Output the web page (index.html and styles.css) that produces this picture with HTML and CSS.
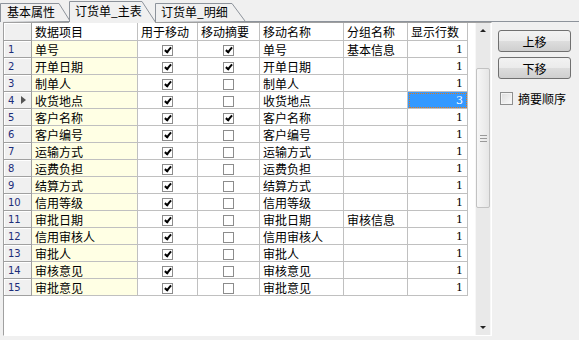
FILE: index.html
```html
<!DOCTYPE html>
<html lang="zh-CN">
<head>
  <meta charset="UTF-8">
  <title>移动设置</title>
  <link rel="stylesheet" href="styles.css">
</head>
<body>
  <!-- Tabs -->
  <div class="tabs">
    <div class="tab t1">
      <svg width="72" height="22"><path d="M0.5 22 V3.5 H59 L70 21" fill="#f0f0f0" stroke="#8d939b"/></svg>
      <span>基本属性</span>
    </div>
    <div class="tab t3">
      <svg width="92" height="22"><path d="M0.5 22 V3.5 H77 L90 21" fill="#f0f0f0" stroke="#8d939b"/></svg>
      <span>订货单_明细</span>
    </div>
    <div class="tab t2 active">
      <svg width="90" height="23"><path d="M0 23 V1.5 H73 L86 22 V23 Z" fill="#f0f0f0" stroke="none"/><path d="M0.5 22 V1.5 H73 L86 21.5" fill="none" stroke="#8d939b"/></svg>
      <span>订货单_主表</span>
    </div>
  </div>

  <div class="main">
    <div class="grid">
      <div class="cells">
        <table>
          <colgroup>
            <col class="c-ind"><col class="c-item"><col class="c-use"><col class="c-sum"><col class="c-name"><col class="c-group"><col class="c-rows">
          </colgroup>
          <thead>
            <tr>
              <th class="ind"></th>
              <th>数据项目</th>
              <th>用于移动</th>
              <th>移动摘要</th>
              <th>移动名称</th>
              <th>分组名称</th>
              <th>显示行数</th>
            </tr>
          </thead>
          <tbody id="rows"></tbody>
        </table>
      </div>
      <div class="vscroll">
        <div class="arrow up"></div>
        <div class="track">
          <div class="thumb"><span class="grip"></span></div>
        </div>
        <div class="arrow down"></div>
      </div>
    </div>

    <div class="side">
      <button class="btn">上移</button>
      <button class="btn">下移</button>
      <label class="check"><span class="box"></span>摘要顺序</label>
    </div>
  </div>

  <script>
    // 数据项目, 用于移动, 移动摘要, 分组名称, 显示行数
    const data = [
      ['单号', 1, 1, '基本信息', 1],
      ['开单日期', 1, 1, '', 1],
      ['制单人', 1, 0, '', 1],
      ['收货地点', 1, 0, '', 3],
      ['客户名称', 1, 1, '', 1],
      ['客户编号', 1, 0, '', 1],
      ['运输方式', 1, 0, '', 1],
      ['运费负担', 1, 0, '', 1],
      ['结算方式', 1, 0, '', 1],
      ['信用等级', 1, 0, '', 1],
      ['审批日期', 1, 0, '审核信息', 1],
      ['信用审核人', 1, 0, '', 1],
      ['审批人', 1, 0, '', 1],
      ['审核意见', 1, 0, '', 1],
      ['审批意见', 1, 0, '', 1]
    ];
    const tbody = document.getElementById('rows');
    const cb = on => `<span class="cb${on ? ' on' : ''}"></span>`;

    tbody.innerHTML = data.map((r, i) => `
      <tr>
        <td class="ind">${i + 1}${i === 3 ? '<span class="cur"></span>' : ''}</td>
        <td class="item">${r[0]}</td>
        <td class="mid">${cb(r[1])}</td>
        <td class="mid">${cb(r[2])}</td>
        <td>${r[0]}</td>
        <td>${r[3]}</td>
        <td class="num${i === 3 ? ' sel' : ''}">${r[4]}</td>
      </tr>`).join('');
  </script>
</body>
</html>
```

FILE: styles.css
```css
body {
  margin: 0;
  width: 579px;
  height: 340px;
  overflow: hidden;
  background-color: #f0f0f0;
  font-family: "Noto Sans CJK SC", "Liberation Sans", sans-serif;
  font-size: 12px;
  color: #000;
}

/* tabs */
.tabs {
  display: flex;
  height: 21px;
  border-bottom: 1px solid #8d939b;
}
.tab {
  position: relative;
  height: 21px;
  line-height: 21px;
}
.tab svg {
  position: absolute;
  left: 0;
  top: 0;
}
.tab span {
  position: relative;
  display: block;
  padding-left: 7px;
  padding-top: 1px;
  white-space: nowrap;
}
.t1 {
  width: 72px;
  order: 1;
  z-index: 1;
}
.t2 {
  width: 90px;
  margin-left: -3px;
  order: 2;
  z-index: 3;
}
.t2 span {
  padding-left: 6px;
  padding-top: 0;
}
.t3 {
  width: 92px;
  margin-left: -4px;
  order: 3;
  z-index: 2;
}
.t3 span {
  padding-left: 6px;
}

/* layout */
.main {
  display: flex;
}
.grid {
  display: flex;
  margin-left: 3px;
  width: 487px;
  height: 312px;
  border: 1px solid;
  border-color: #a0a0a0 #ffffff #ffffff #a0a0a0;
  background-color: #fff;
}
.cells {
  width: 471px;
  overflow: hidden;
}

/* table */
table {
  border-collapse: separate;
  border-spacing: 0;
  table-layout: fixed;
  width: 464px;
}
.c-ind { width: 28px; }
.c-item { width: 106px; }
.c-use { width: 60px; }
.c-sum { width: 62px; }
.c-name { width: 84px; }
.c-group { width: 64px; }
.c-rows { width: 60px; }

th, td {
  box-sizing: border-box;
  border-right: 1px solid #c0c0c0;
  border-bottom: 1px solid #c0c0c0;
  padding: 0 0 0 3px;
  white-space: nowrap;
  overflow: hidden;
  font-weight: normal;
  text-align: left;
}
th {
  height: 18px;
  line-height: 16px;
  background-color: #fff;
}
td {
  height: 17px;
  line-height: 15px;
}
.ind {
  position: relative;
  background-color: #f0f0f0;
  border-right-color: #a0a0a0;
  border-bottom-color: #a0a0a0;
  box-shadow: inset 1px 1px 0 #fff;
  color: #1c2d7a;
  font-family: "DejaVu Sans", sans-serif;
  font-size: 10px;
  padding-left: 4px;
}
.cur {
  position: absolute;
  left: 17px;
  top: 4px;
  border-left: 5px solid #555;
  border-top: 4px solid transparent;
  border-bottom: 4px solid transparent;
}
.item {
  background-color: #ffffe4;
}
.mid {
  text-align: center;
  padding: 0;
}
.num {
  text-align: right;
  padding: 0 4px 0 0;
  font-family: "DejaVu Serif", serif;
  font-size: 11px;
}
.num.sel {
  background-color: #3399ff;
  color: #fff;
  outline: 1px dotted #e07a1a;
  outline-offset: -2px;
}

/* checkbox in grid */
.cb {
  position: relative;
  display: inline-block;
  width: 9px;
  height: 9px;
  border: 1px solid #8c8c8c;
  background-color: #fff;
  vertical-align: -1px;
}
.cb.on::after {
  content: "";
  position: absolute;
  left: 3px;
  top: 0;
  width: 2px;
  height: 5px;
  border: solid #000;
  border-width: 0 2px 2px 0;
  transform: rotate(40deg);
}

/* scrollbar */
.vscroll {
  display: flex;
  flex-direction: column;
  width: 16px;
  background-color: #e9e9e9;
  box-shadow: inset 1px 0 0 #f7f7f7, inset -1px 0 0 #f7f7f7;
}
.arrow {
  height: 17px;
  position: relative;
}
.arrow::after {
  content: "";
  position: absolute;
  left: 5px;
  border-left: 3px solid transparent;
  border-right: 3px solid transparent;
}
.arrow.up::after {
  top: 6px;
  border-bottom: 3px solid #222;
}
.arrow.down::after {
  top: 8px;
  border-top: 3px solid #222;
}
.track {
  flex: 1;
  padding-top: 28px;
}
.thumb {
  position: relative;
  margin: 0 1px;
  height: 140px;
  box-sizing: border-box;
  border: 1px solid #c2c2c2;
  border-radius: 2px;
  background: linear-gradient(to right, #f6f6f6, #e6e6e6);
}
.grip {
  position: absolute;
  left: 3px;
  top: 66px;
  width: 7px;
  height: 5px;
  border-top: 1px solid #999;
  border-bottom: 1px solid #999;
}
.grip::after {
  content: "";
  position: absolute;
  left: 0;
  top: 2px;
  width: 7px;
  border-top: 1px solid #999;
}

/* right side */
.side {
  display: flex;
  flex-direction: column;
  align-items: flex-start;
  gap: 5px;
  padding: 8px 0 0 6px;
}
.btn {
  width: 73px;
  height: 22px;
  padding: 0;
  border: 1px solid #707070;
  border-radius: 3px;
  background: linear-gradient(#f2f2f2 0%, #ebebeb 50%, #dddddd 51%, #cfcfcf 100%);
  font-family: inherit;
  font-size: 12px;
  color: #000;
}
.check {
  display: flex;
  align-items: center;
  gap: 5px;
  margin-top: 6px;
  padding-left: 2px;
}
.box {
  width: 11px;
  height: 11px;
  border: 1px solid #8e8f8f;
  background: linear-gradient(135deg, #dcdcdc, #fbfbfb);
  box-shadow: inset 0 0 0 1px #f4f4f4;
}
```
